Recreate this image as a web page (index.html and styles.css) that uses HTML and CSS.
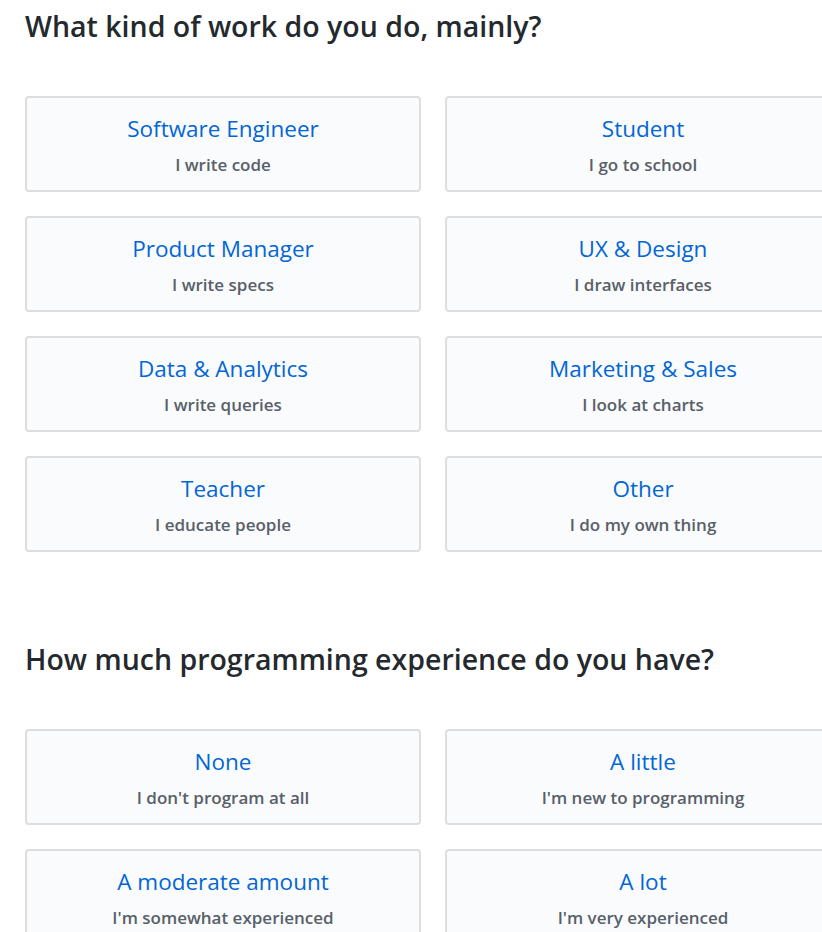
FILE: index.html
```html
<!DOCTYPE html>
<html lang="en">
<head>
<meta charset="utf-8">
<title>Onboarding</title>
<link rel="stylesheet" href="styles.css">
</head>
<body>
<main class="page">
  <section class="question">
    <h2 class="question-title">What kind of work do you do, mainly?</h2>
    <div class="options">
      <button class="option"><span class="option-title">Software Engineer</span><span class="option-sub">I write code</span></button>
      <button class="option"><span class="option-title">Student</span><span class="option-sub">I go to school</span></button>
      <button class="option"><span class="option-title">Product Manager</span><span class="option-sub">I write specs</span></button>
      <button class="option"><span class="option-title">UX &amp; Design</span><span class="option-sub">I draw interfaces</span></button>
      <button class="option"><span class="option-title">Data &amp; Analytics</span><span class="option-sub">I write queries</span></button>
      <button class="option"><span class="option-title">Marketing &amp; Sales</span><span class="option-sub">I look at charts</span></button>
      <button class="option"><span class="option-title">Teacher</span><span class="option-sub">I educate people</span></button>
      <button class="option"><span class="option-title">Other</span><span class="option-sub">I do my own thing</span></button>
    </div>
  </section>
  <section class="question">
    <h2 class="question-title">How much programming experience do you have?</h2>
    <div class="options">
      <button class="option"><span class="option-title">None</span><span class="option-sub">I don't program at all</span></button>
      <button class="option"><span class="option-title">A little</span><span class="option-sub">I'm new to programming</span></button>
      <button class="option"><span class="option-title">A moderate amount</span><span class="option-sub">I'm somewhat experienced</span></button>
      <button class="option"><span class="option-title">A lot</span><span class="option-sub">I'm very experienced</span></button>
    </div>
  </section>
</main>
</body>
</html>
```
FILE: styles.css
```css
html, body {
  margin: 0;
  padding: 0;
  overflow: hidden;
  background: #fff;
}
body {
  font-family: "Open Sans", "Noto Sans", sans-serif;
  color: #24292e;
}
.page {
  padding: 0 0 0 25px;
  width: 900px;
}
.question {
  margin-bottom: 81px;
}
.question-title {
  margin: 0;
  padding-top: 6px;
  font-size: 28.5px;
  line-height: 40px;
  font-weight: 600;
  color: #24292e;
}
.options {
  margin-top: 50px;
  display: grid;
  grid-template-columns: 396px 396px;
  column-gap: 24px;
  row-gap: 24px;
}
.option {
  height: 96px;
  box-sizing: border-box;
  border: 2px solid #dcdee0;
  border-radius: 4px;
  background: #fafbfc;
  font-family: inherit;
  display: flex;
  flex-direction: column;
  align-items: center;
  justify-content: flex-start;
  padding: 15px 0 0;
  cursor: pointer;
}
.option-title {
  font-size: 22.5px;
  line-height: 32px;
  color: #0366d6;
  font-weight: 400;
}
.option-sub {
  margin-top: 8px;
  font-size: 17px;
  line-height: 24px;
  font-weight: 600;
  color: #586069;
}
```
